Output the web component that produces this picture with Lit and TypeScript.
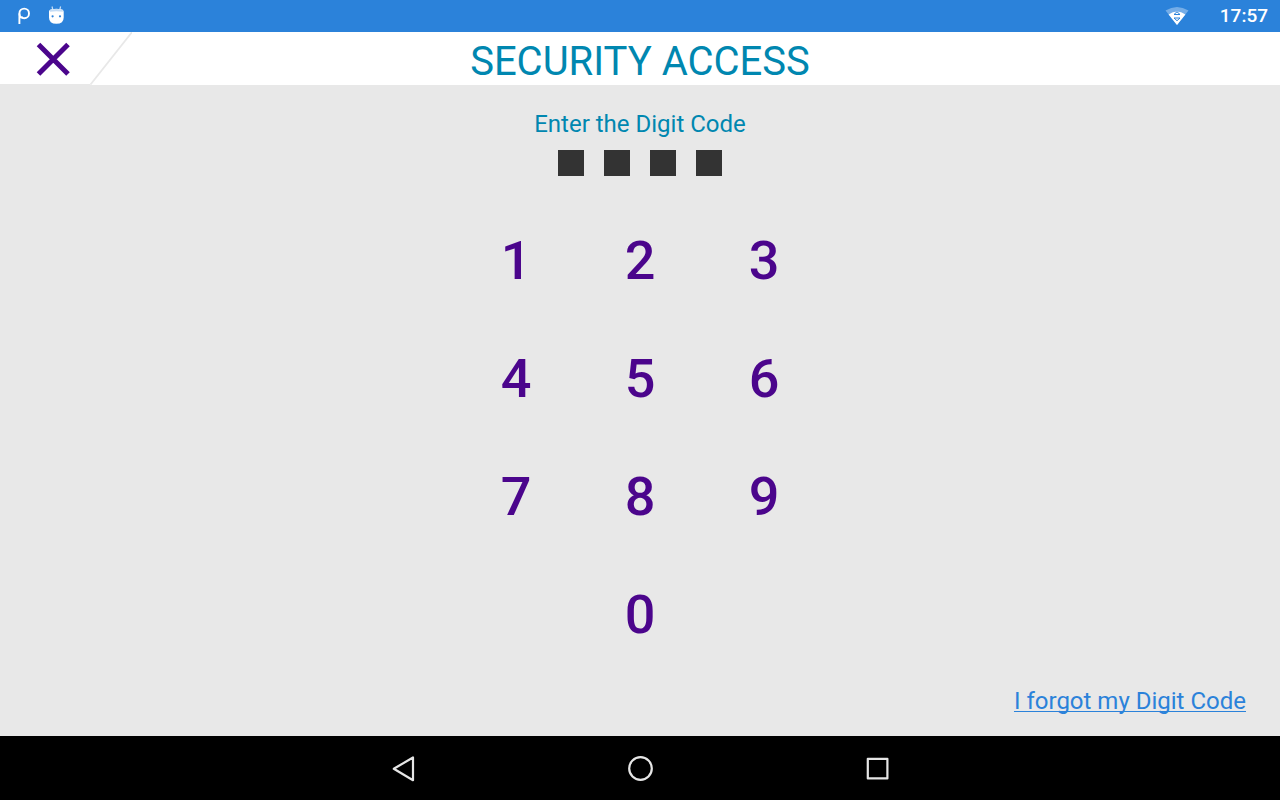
import { LitElement, html, css } from "lit";
import { customElement, state } from "lit/decorators.js";

@customElement("status-bar")
class StatusBar extends LitElement {
  static styles = css`
    :host {
      display: flex;
      align-items: center;
      justify-content: space-between;
      height: 32px;
      padding: 0 12px;
      background: #2b82da;
      color: #fff;
      font-size: 19px;
      font-weight: 500;
      line-height: 32px;
    }
    .group {
      display: flex;
      align-items: center;
    }
    .left { gap: 8px; }
    .right { gap: 30px; }
    svg { display: block; }
  `;

  render() {
    return html`
      <div class="group left">
        <svg width="24" height="32" viewBox="0 0 24 32" fill="none" stroke="#fff" stroke-width="1.9" aria-hidden="true">
          <circle cx="12.2" cy="13.4" r="4.8" />
          <path d="M7.4 24V13.4M7.4 17.4H11" />
        </svg>
        <svg width="24" height="32" viewBox="0 0 24 32" aria-hidden="true">
          <path d="M8 6.5l1 4M16.6 6.5l-1 4" stroke="#fff" stroke-opacity=".75" stroke-width="1.2" />
          <path d="M5 11.5Q5 9.5 7.5 9.2Q12.5 8.400 17 9.2Q19.7 9.5 19.7 11.5V17.5Q19.7 23.8 12.400 23.8Q5 23.8 5 17.5Z" fill="#fff" />
          <path d="M6 11.8Q12.400 10.6 18.8 11.8V9.8Q12.400 8.3 6 9.8Z" fill="#c4dcf5" />
          <circle cx="8.6" cy="16.3" r="1.1" fill="#2b82da" />
          <circle cx="16" cy="16.3" r="1.1" fill="#2b82da" />
        </svg>
      </div>
      <div class="group right">
        <svg width="26" height="32" viewBox="0 0 26 32" aria-hidden="true">
          <path d="M1.5 10.6Q13 3.4 24.5 10.6L13 25Z" fill="#fff" fill-opacity=".35" />
          <path d="M4.6 14.4Q13 8.6 21.4 14.4L13 25Z" fill="#fff" />
          <path d="M10 14.5L13 11.8L16 14.5ZM10 18L13 20.7L16 18Z" fill="#fff" stroke="#2b82da" stroke-width="1" />
        </svg>
        <time>17:57</time>
      </div>
    `;
  }
}

@customElement("title-bar")
class TitleBar extends LitElement {
  static styles = css`
    :host {
      display: grid;
      grid-template-columns: 132px 1fr 132px;
      align-items: start;
      height: 53px;
      background: #fff;
    }
    .close {
      padding: 0;
      border: 0;
      background: none;
      cursor: pointer;
    }
    svg { display: block; }
    h1 {
      margin: 0;
      color: #0087b0;
      font-size: 40px;
      font-weight: 400;
      line-height: 59px;
      text-align: center;
    }
  `;

  render() {
    return html`
      <button class="close" aria-label="Close">
        <svg width="132" height="53" viewBox="0 0 132 53" fill="none">
          <path d="M0 52.5H90.5" stroke="#e8e8e8" />
          <path d="M90.5 52.5L132.5 -0.5" stroke="#e8e8e8" stroke-width="1.8" />
          <path d="M38.5 12.5L68 42M68 12.5L38.5 42" stroke="#4b058c" stroke-width="5" />
        </svg>
      </button>
      <h1>SECURITY ACCESS</h1>
    `;
  }
}

@customElement("digit-pad")
class DigitPad extends LitElement {
  static styles = css`
    :host {
      display: grid;
      grid-template-columns: repeat(3, 124px);
      grid-auto-rows: 118px;
      justify-content: center;
    }
    .key {
      padding: 0;
      border: 0;
      background: none;
      color: #4b058c;
      font-family: inherit;
      font-size: 54px;
      font-weight: 500;
      line-height: 64px;
      cursor: pointer;
    }
    .zero { grid-column: 2; }
  `;

  private press(digit: number) {
    this.dispatchEvent(new CustomEvent("digit", { detail: digit }));
  }

  render() {
    return [1, 2, 3, 4, 5, 6, 7, 8, 9, 0].map(
      (d) => html`<button class="key ${d === 0 ? "zero" : ""}" @click=${() => this.press(d)}>${d}</button>`
    );
  }
}

@customElement("nav-bar")
class NavBar extends LitElement {
  static styles = css`
    :host {
      display: flex;
      justify-content: center;
      gap: 173px;
      height: 64px;
      background: #000;
    }
    button {
      padding: 0;
      border: 0;
      background: none;
      cursor: pointer;
    }
    svg {
      display: block;
      fill: none;
      stroke: #e6e6e6;
      stroke-width: 2.2;
      stroke-linejoin: round;
    }
  `;

  render() {
    return html`
      <button aria-label="Back">
        <svg width="64" height="64" viewBox="0 0 64 64"><path d="M42 21.5V44.2L22.8 32.8Z" /></svg>
      </button>
      <button aria-label="Home">
        <svg width="64" height="64" viewBox="0 0 64 64"><circle cx="32.5" cy="32.5" r="11.3" /></svg>
      </button>
      <button aria-label="Recent apps">
        <svg width="64" height="64" viewBox="0 0 64 64"><rect x="22.8" y="22.8" width="19.6" height="19.6" /></svg>
      </button>
    `;
  }
}

@customElement("app-root")
class AppRoot extends LitElement {
  static styles = css`
    :host {
      display: flex;
      flex-direction: column;
      min-height: 100vh;
      background: #e8e8e8;
      font-family: Roboto, "Liberation Sans", sans-serif;
    }
    main {
      display: flex;
      flex: 1;
      flex-direction: column;
      padding: 25px 34px 21px;
    }
    .prompt {
      margin: 0;
      color: #0087b0;
      font-size: 24px;
      line-height: 28px;
      text-align: center;
    }
    .code {
      display: flex;
      justify-content: center;
      gap: 20px;
      margin: 12px 0 26px;
    }
    .slot {
      width: 26px;
      height: 26px;
      background: #333;
    }
    .filled { background: #4b058c; }
    .forgot {
      align-self: flex-end;
      margin-top: auto;
      color: #2b82da;
      font-size: 24px;
      line-height: 28px;
      text-decoration-thickness: 1px;
      text-underline-offset: 2px;
      text-decoration-skip-ink: none;
    }
  `;

  @state() private entered: number[] = [];

  private onDigit(e: CustomEvent<number>) {
    if (this.entered.length < 4) this.entered = [...this.entered, e.detail];
  }

  render() {
    return html`
      <status-bar></status-bar>
      <title-bar></title-bar>
      <main>
        <p class="prompt">Enter the Digit Code</p>
        <div class="code">
          ${[0, 1, 2, 3].map(
            (i) => html`<span class="slot ${i < this.entered.length ? "filled" : ""}"></span>`
          )}
        </div>
        <digit-pad @digit=${this.onDigit}></digit-pad>
        <a class="forgot" href="#">I forgot my Digit Code</a>
      </main>
      <nav-bar></nav-bar>
    `;
  }
}
